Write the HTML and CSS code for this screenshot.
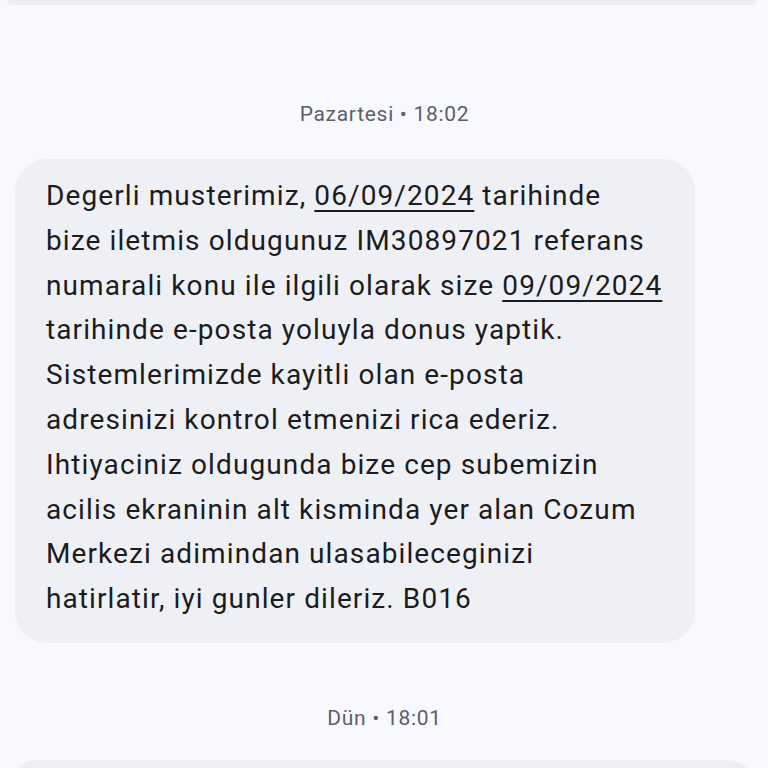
FILE: index.html
```html
<!DOCTYPE html>
<html lang="tr">
<head>
<meta charset="utf-8">
<link rel="stylesheet" href="styles.css">
</head>
<body>
<div class="thread">
  <div class="bubble-edge bubble-edge--top"></div>
  <div class="stamp">Pazartesi • 18:02</div>
  <div class="bubble">
    <p class="msg">Degerli musterimiz, <span class="link">06/09/2024</span> tarihinde<br>bize iletmis oldugunuz IM30897021 referans<br>numarali konu ile ilgili olarak size <span class="link">09/09/2024</span><br>tarihinde e-posta yoluyla donus yaptik.<br>Sistemlerimizde kayitli olan e-posta<br>adresinizi kontrol etmenizi rica ederiz.<br>Ihtiyaciniz oldugunda bize cep subemizin<br>acilis ekraninin alt kisminda yer alan Cozum<br>Merkezi adimindan ulasabileceginizi<br>hatirlatir, iyi gunler dileriz. B016</p>
  </div>
  <div class="stamp stamp--second">Dün • 18:01</div>
  <div class="bubble-edge bubble-edge--bottom"></div>
</div>
</body>
</html>
```
FILE: styles.css
```css
html, body {
  margin: 0;
  padding: 0;
  background: #f8f9fe;
  height: 768px;
  overflow: hidden;
}
.thread {
  display: flex;
  flex-direction: column;
  align-items: flex-start;
  font-family: Roboto, "Noto Sans", sans-serif;
}
.bubble-edge {
  background: #eeeff4;
  width: 750px;
  margin-left: 7px;
}
.bubble-edge--top {
  height: 5px;
  border-radius: 0 0 6px 6px;
}
.bubble-edge--bottom {
  height: 40px;
  border-radius: 30px 30px 0 0;
  margin-top: 30px;
}
.stamp {
  align-self: stretch;
  text-align: center;
  font-size: 21px;
  line-height: 24px;
  letter-spacing: 0.7px;
  color: #5e5f66;
  margin-top: 97px;
  padding-left: 1px;
}
.stamp--second {
  margin-top: 63px;
}
.bubble {
  margin-top: 33px;
  margin-left: 15px;
  width: 680px;
  box-sizing: border-box;
  padding: 15px 10px 21px 31px;
  background: #eff0f5;
  border-radius: 32px;
}
.msg {
  margin: 0;
  font-size: 28px;
  line-height: 44.8px;
  letter-spacing: 1.1px;
  color: #1c1c20;
  white-space: nowrap;
}
.link {
  text-decoration: underline;
  text-decoration-thickness: 2px;
  text-underline-offset: 5px;
}
```
